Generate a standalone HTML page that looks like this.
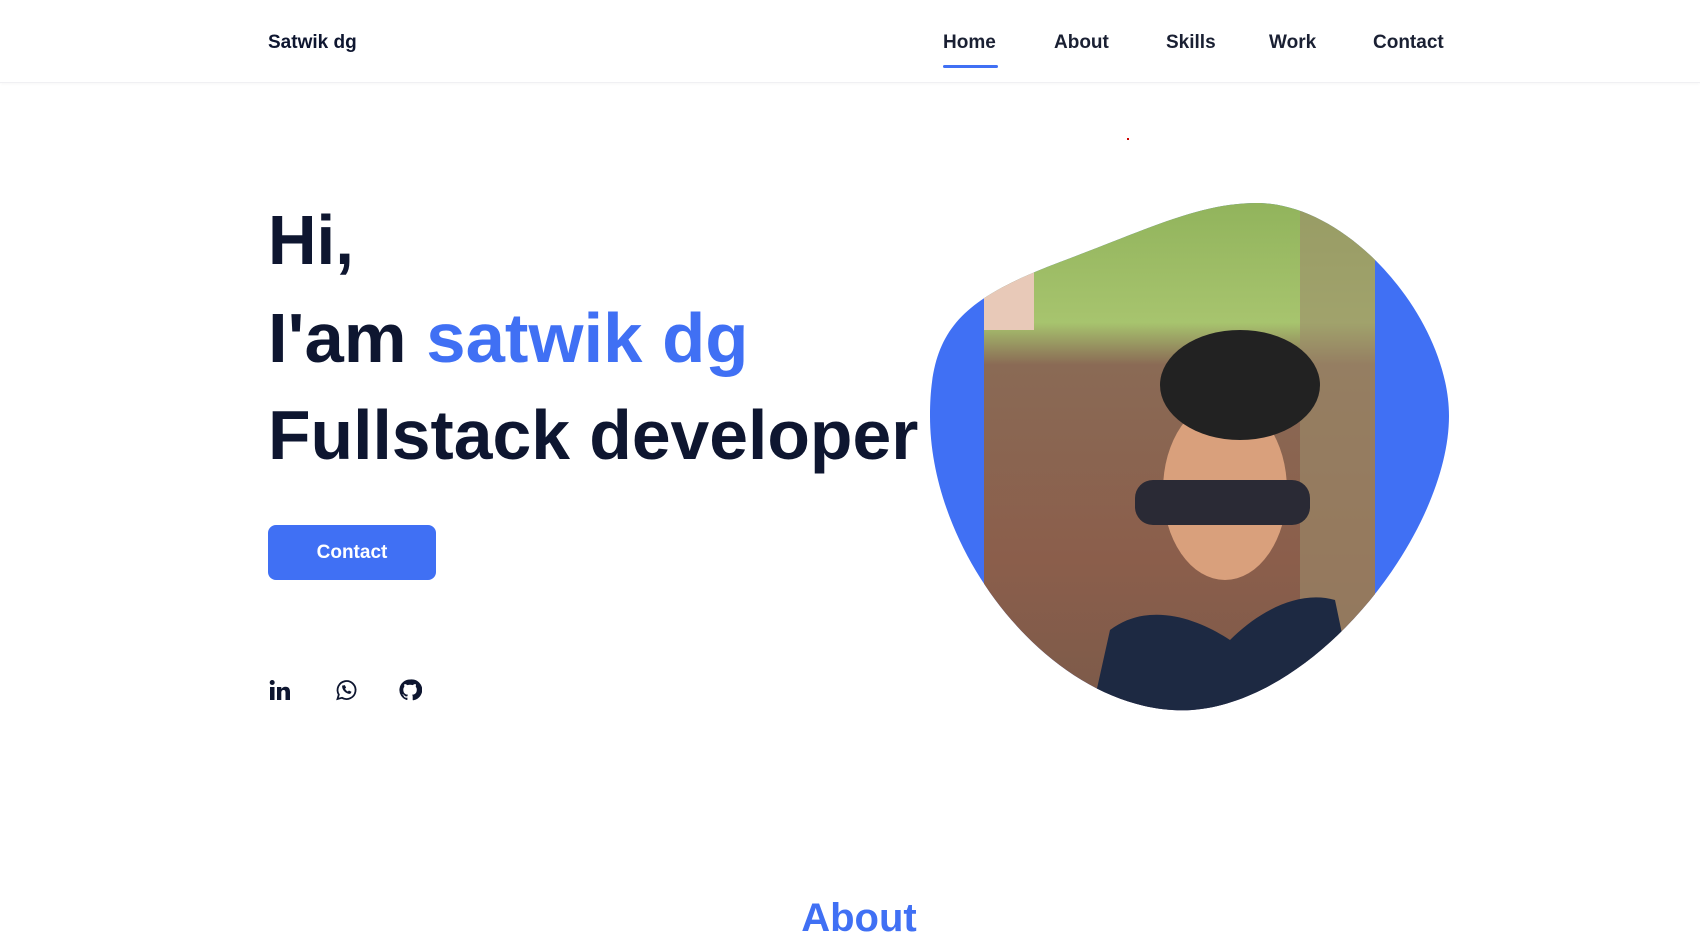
<!DOCTYPE html>
<html><head><meta charset="utf-8"><style>
*{margin:0;padding:0;box-sizing:border-box}
body{width:1700px;height:931px;overflow:hidden;background:#fff;font-family:"Liberation Sans",sans-serif;color:#0e1630;position:relative}
.nav{position:absolute;left:0;top:0;width:1700px;height:83px;border-bottom:1px solid #f0f0f3;box-shadow:0 1px 3px rgba(0,0,0,.03)}
.logo{position:absolute;left:268px;top:32px;font-size:19px;font-weight:bold}
.nav a{position:absolute;top:32px;font-size:19px;font-weight:bold;color:#1a2033;text-decoration:none}
.ul{position:absolute;left:943px;top:65px;width:55px;height:3px;background:#4070f4;border-radius:2px}
h1{position:absolute;left:268px;font-size:70px;font-weight:bold;white-space:nowrap;line-height:1;transform-origin:left;}
.b{color:#4070f4}
.btn{position:absolute;left:268px;top:525px;width:168px;height:55px;background:#4070f4;border-radius:8px;color:#fff;font-weight:bold;font-size:19px;text-align:center;line-height:55px}
.about{position:absolute;left:0;width:1718px;text-align:center;top:896px;font-size:40px;font-weight:bold;color:#4070f4}
</style></head><body>
<div class="nav">
<div class="logo">Satwik dg</div>
<a style="left:943px">Home</a><a style="left:1054px">About</a><a style="left:1166px">Skills</a><a style="left:1269px">Work</a><a style="left:1373px">Contact</a>
<div class="ul"></div>
</div>
<h1 style="top:205px;transform:scaleX(0.96)">Hi,</h1>
<h1 style="top:303px;transform:scaleX(1.01)">I'am <span class="b">satwik dg</span></h1>
<h1 style="top:400px;transform:scaleX(0.995)">Fullstack developer</h1>
<div class="btn">Contact</div>
<svg style="position:absolute;left:268px;top:677px" width="24" height="26" viewBox="0 0 24 24"><rect x="2" y="9" width="4.5" height="13" fill="#0e1630"/><circle cx="4.2" cy="4.5" r="2.5" fill="#0e1630"/><path d="M9 9h4.3v2c.8-1.4 2.4-2.3 4.3-2.3 3 0 4.4 1.9 4.4 5.2V22h-4.5v-7.4c0-1.7-.6-2.6-1.9-2.6-1.4 0-2.3 1-2.3 2.8V22H9z" fill="#0e1630"/></svg>
<svg style="position:absolute;left:334px;top:678px" width="24" height="24" viewBox="0 0 24 24" fill="none" stroke="#0e1630" stroke-width="1.8"><path d="M3.5 21l1.3-4.4A9 9 0 1 1 8 19.8z"/><path d="M8.5 8c0 4 3.5 7.5 7.5 7.5l1-1.5-2-1-1 1c-1.5-.6-2.8-1.9-3.4-3.4l1-1-1-2z" fill="#0e1630" stroke-width="0.8"/></svg>
<svg style="position:absolute;left:398px;top:678px" width="24" height="24" viewBox="0 0 24 24"><path d="M12 1.5A10.5 10.5 0 0 0 8.7 22c.5.1.7-.2.7-.5v-1.9c-2.9.6-3.5-1.3-3.5-1.3-.5-1.2-1.2-1.5-1.2-1.5-1-.6 0-.6 0-.6 1 .1 1.6 1.1 1.6 1.1.9 1.6 2.5 1.1 3.1.9.1-.7.4-1.1.7-1.4-2.3-.3-4.8-1.2-4.8-5.2 0-1.1.4-2.1 1.1-2.8-.1-.3-.5-1.3.1-2.8 0 0 .9-.3 2.9 1.1a10 10 0 0 1 5.3 0c2-1.4 2.9-1.1 2.9-1.1.6 1.5.2 2.5.1 2.8.7.7 1.1 1.7 1.1 2.8 0 4-2.5 4.9-4.8 5.2.4.3.7 1 .7 2v3c0 .3.2.6.7.5A10.5 10.5 0 0 0 12 1.5z" fill="#0e1630"/></svg>
<div style="position:absolute;left:1127px;top:138px;width:2px;height:2px;background:#c00"></div>
<svg style="position:absolute;left:0;top:0" width="1700" height="931">
<defs>
<clipPath id="c"><path d="M1257,203 C1350,203 1449,320 1449,416 C1449,530 1320,700 1192,710 C1060,718 930,560 930,416 C930,330 960,300 1060,262 C1150,228 1200,203 1257,203 Z"/></clipPath>
<linearGradient id="g" x1="0" y1="0" x2="0" y2="1"><stop offset="0" stop-color="#8fb25a"/><stop offset=".25" stop-color="#a7c46e"/><stop offset=".33" stop-color="#8a6a55"/><stop offset=".7" stop-color="#8b5e4b"/><stop offset="1" stop-color="#7a5a4a"/></linearGradient>
</defs>
<g clip-path="url(#c)">
<rect x="900" y="190" width="560" height="530" fill="#4070f4"/>
<rect x="984" y="190" width="391" height="530" fill="url(#g)"/>
<rect x="984" y="270" width="50" height="60" fill="#e8c9b8"/>
<rect x="1300" y="190" width="75" height="530" fill="#9c8c6a" opacity=".6"/>
<ellipse cx="1225" cy="490" rx="62" ry="90" fill="#d9a07c"/>
<ellipse cx="1240" cy="385" rx="80" ry="55" fill="#222"/>
<rect x="1135" y="480" width="175" height="45" rx="18" fill="#2a2a35"/>
<path d="M1090 720 L1110 630 C1150 600 1200 620 1230 640 C1260 610 1300 590 1335 600 L1360 720 Z" fill="#1d2942"/>
</g>
</svg>
<div class="about">About</div>
</body></html>
